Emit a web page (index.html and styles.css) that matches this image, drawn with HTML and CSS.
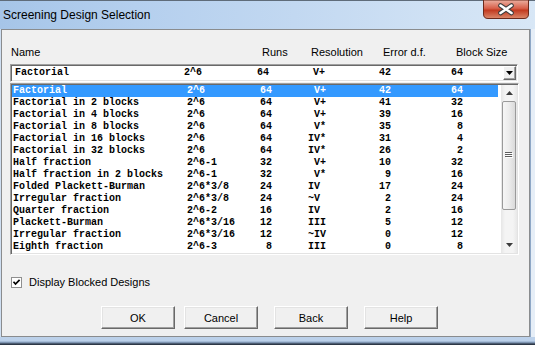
FILE: index.html
```html
<!DOCTYPE html>
<html>
<head>
<meta charset="utf-8">
<link rel="stylesheet" href="styles.css">
</head>
<body>
<div class="window">
  <div class="titlebar">
    <span class="title">Screening Design Selection</span>
    <div class="close">
      <svg width="46" height="19" viewBox="0 0 46 19">
        <defs>
          <linearGradient id="cg" x1="0" y1="0" x2="0" y2="1">
            <stop offset="0" stop-color="#ecb1a2"/>
            <stop offset="0.45" stop-color="#d8604a"/>
            <stop offset="0.55" stop-color="#c23a20"/>
            <stop offset="1" stop-color="#dc8a6c"/>
          </linearGradient>
        </defs>
        <path d="M0.5 0 V14 Q0.5 18.5 5 18.5 H41 Q45.5 18.5 45.5 14 V0 Z" fill="url(#cg)" stroke="#6b2a1c"/>
        <path d="M17.5 5.5 L28.5 13 M28.5 5.5 L17.5 13" stroke="#3d3d3d" stroke-width="4.6" stroke-linecap="round"/>
        <path d="M17.5 5.5 L28.5 13 M28.5 5.5 L17.5 13" stroke="#ffffff" stroke-width="2.6" stroke-linecap="round"/>
      </svg>
    </div>
  </div>
  <div class="client">
    <div class="headers">
      <span>Name</span><span>Runs</span><span>Resolution</span><span>Error d.f.</span><span>Block Size</span>
    </div>
    <div class="combo">
      <div class="combo-row">
        <span>Factorial</span><span>2^6</span><span class="r">64</span><span class="res"> V+</span><span class="r">42</span><span class="r">64</span>
      </div>
      <div class="drop">
        <svg width="7" height="4" viewBox="0 0 7 4"><path d="M0 0 H7 L3.5 4 Z" fill="#000"/></svg>
      </div>
    </div>
    <div class="list">
      <div class="rows">
        <div class="row sel"><span>Factorial</span><span>2^6</span><span class="r">64</span><span class="res"> V+</span><span class="r">42</span><span class="r">64</span></div>
        <div class="row"><span>Factorial in 2 blocks</span><span>2^6</span><span class="r">64</span><span class="res"> V+</span><span class="r">41</span><span class="r">32</span></div>
        <div class="row"><span>Factorial in 4 blocks</span><span>2^6</span><span class="r">64</span><span class="res"> V+</span><span class="r">39</span><span class="r">16</span></div>
        <div class="row"><span>Factorial in 8 blocks</span><span>2^6</span><span class="r">64</span><span class="res"> V*</span><span class="r">35</span><span class="r">8</span></div>
        <div class="row"><span>Factorial in 16 blocks</span><span>2^6</span><span class="r">64</span><span class="res">IV*</span><span class="r">31</span><span class="r">4</span></div>
        <div class="row"><span>Factorial in 32 blocks</span><span>2^6</span><span class="r">64</span><span class="res">IV*</span><span class="r">26</span><span class="r">2</span></div>
        <div class="row"><span>Half fraction</span><span>2^6-1</span><span class="r">32</span><span class="res"> V+</span><span class="r">10</span><span class="r">32</span></div>
        <div class="row"><span>Half fraction in 2 blocks</span><span>2^6-1</span><span class="r">32</span><span class="res"> V*</span><span class="r">9</span><span class="r">16</span></div>
        <div class="row"><span>Folded Plackett-Burman</span><span>2^6*3/8</span><span class="r">24</span><span class="res">IV</span><span class="r">17</span><span class="r">24</span></div>
        <div class="row"><span>Irregular fraction</span><span>2^6*3/8</span><span class="r">24</span><span class="res">~V</span><span class="r">2</span><span class="r">24</span></div>
        <div class="row"><span>Quarter fraction</span><span>2^6-2</span><span class="r">16</span><span class="res">IV</span><span class="r">2</span><span class="r">16</span></div>
        <div class="row"><span>Plackett-Burman</span><span>2^6*3/16</span><span class="r">12</span><span class="res">III</span><span class="r">5</span><span class="r">12</span></div>
        <div class="row"><span>Irregular fraction</span><span>2^6*3/16</span><span class="r">12</span><span class="res">~IV</span><span class="r">0</span><span class="r">12</span></div>
        <div class="row"><span>Eighth fraction</span><span>2^6-3</span><span class="r">8</span><span class="res">III</span><span class="r">0</span><span class="r">8</span></div>
      </div>
      <div class="scrollbar">
        <div class="sb-btn"><svg width="7" height="4" viewBox="0 0 7 4"><path d="M0 4 H7 L3.5 0 Z" fill="#3c3c3c"/></svg></div>
        <div class="sb-thumb">
          <svg width="8" height="7" viewBox="0 0 8 7">
            <path d="M0 0.5 H7 M0 2.5 H7 M0 4.5 H7" stroke="#5e5e5e" stroke-width="1"/>
            <path d="M1 1.5 H8 M1 3.5 H8 M1 5.5 H8" stroke="#ffffff" stroke-width="1"/>
          </svg>
        </div>
        <div class="sb-space"></div>
        <div class="sb-btn"><svg width="7" height="4" viewBox="0 0 7 4"><path d="M0 0 H7 L3.5 4 Z" fill="#3c3c3c"/></svg></div>
      </div>
    </div>
    <div class="check">
      <svg class="box" width="11" height="11" viewBox="0 0 11 11">
        <rect x="0.5" y="0.5" width="10" height="10" fill="#ffffff" stroke="#8f8f8f"/>
        <path d="M2.5 4.8 L4.5 7 L8.6 2.8" stroke="#000" stroke-width="1.7" fill="none"/>
      </svg>
      <span>Display Blocked Designs</span>
    </div>
    <div class="buttons">
      <div class="btn">OK</div>
      <div class="btn b-cancel">Cancel</div>
      <div class="btn b-wide">Back</div>
      <div class="btn b-wide">Help</div>
    </div>
  </div>
  <div class="frame-bottom"></div>
</div>
</body>
</html>
```
FILE: styles.css
```css
* { box-sizing: border-box; }
body {
  margin: 0;
  background: #cfdff2;
  font-family: "Liberation Sans", Arial, sans-serif;
}
.window {
  width: 535px;
  height: 345px;
  display: flex;
  flex-direction: column;
  background: linear-gradient(to right, #cfdff2 0, #cfdff2 529px, #8ea7c6 529px, #8ea7c6 531px, #e6eef7 531px);
  overflow: hidden;
}
.titlebar {
  height: 29px;
  flex: none;
  display: flex;
  align-items: flex-start;
  border-top: 1px solid #5f6c7a;
  background: linear-gradient(to right, #a6c5e8 0%, #b4cfee 25%, #c2d8f1 55%, #cfe1f4 80%, #d8e7f6 100%);
}
.title {
  font-size: 12px;
  line-height: 15px;
  margin: 7px 0 0 3px;
  color: #000;
}
.close {
  margin-left: auto;
  margin-right: 6px;
  margin-top: -1px;
  width: 46px;
  height: 19px;
  display: flex;
}
.client {
  flex: none;
  width: 529px;
  height: 308px;
  margin-left: 1px;
  border: 1px solid #8a8c8e;
  background: #f0f0f0;
  display: flex;
  flex-direction: column;
}
.headers {
  margin: 16px 0 0 9px;
  height: 13px;
  font-size: 11px;
  line-height: 13px;
  display: grid;
  grid-template-columns: 251px 49px 72px 73px 1fr;
  color: #000;
}
.combo {
  margin: 5px 0 0 8px;
  width: 508px;
  height: 18px;
  border: 1px solid;
  border-color: #a0a0a0 #ffffff #ffffff #a0a0a0;
  box-shadow: inset 1px 1px #696969, inset -1px -1px #e3e3e3;
  padding: 1px;
  background: #ffffff;
  display: flex;
}
.combo-row {
  flex: 1;
  padding-left: 3px;
  display: grid;
  grid-template-columns: 169px 60px 25px 81px 41px 72px;
  font-family: "Liberation Mono", "Courier New", monospace;
  font-weight: bold;
  font-size: 10px;
  line-height: 14px;
  white-space: pre;
  color: #000;
}
.combo-row .res { padding-left: 38px; }
.drop {
  width: 13px;
  height: 14px;
  background: #f0f0f0;
  border: 1px solid;
  border-color: #ffffff #696969 #696969 #ffffff;
  box-shadow: inset -1px -1px #a0a0a0;
  display: flex;
  align-items: center;
  justify-content: center;
}
.list {
  margin: 1px 0 0 8px;
  width: 509px;
  height: 172px;
  border: 1px solid;
  border-color: #a0a0a0 #ffffff #ffffff #a0a0a0;
  box-shadow: inset 1px 1px #696969, inset -1px -1px #e3e3e3;
  padding: 1px;
  background: #ffffff;
  display: flex;
}
.rows {
  flex: 1;
  display: flex;
  flex-direction: column;
}
.row {
  height: 12px;
  padding-left: 1px;
  display: grid;
  grid-template-columns: 174px 61px 24px 78px 41px 72px;
  font-family: "Liberation Mono", "Courier New", monospace;
  font-weight: bold;
  font-size: 10px;
  line-height: 12px;
  white-space: pre;
  color: #000;
}
.row .res { padding-left: 36px; }
.r { text-align: right; }
.row.sel {
  background: #3399ff;
  color: #ffffff;
}
.scrollbar {
  width: 16px;
  margin-left: 3px;
  display: flex;
  flex-direction: column;
  background: linear-gradient(to right, #e6e6e6, #f4f4f4 25%, #f4f4f4 75%, #e8e8e8);
}
.sb-btn {
  height: 16px;
  display: flex;
  align-items: center;
  justify-content: center;
}
.sb-thumb {
  height: 109px;
  margin: 0 1px;
  border: 1px solid #9a9a9a;
  border-radius: 2px;
  background: linear-gradient(to right, #f6f6f6, #ececec 50%, #dadada);
  display: flex;
  align-items: center;
  justify-content: center;
}
.sb-space { flex: 1; }
.check {
  margin: 22px 0 0 9px;
  height: 11px;
  display: flex;
  align-items: center;
  font-size: 11px;
  line-height: 11px;
  color: #000;
}
.check .box { flex: none; }
.check span { margin-left: 7px; }
.buttons {
  margin: 18px 0 0 99px;
  display: flex;
}
.btn {
  width: 74px;
  height: 23px;
  background: #f0f0f0;
  border: 1px solid;
  border-color: #ffffff #696969 #696969 #ffffff;
  box-shadow: inset -1px -1px #a0a0a0, inset 1px 1px #e3e3e3;
  display: flex;
  align-items: center;
  justify-content: center;
  font-size: 11px;
  color: #000;
}
.b-cancel { margin-left: 9px; }
.b-wide { margin-left: 16px; }
.frame-bottom {
  flex: 1;
  background: linear-gradient(to bottom, #bcd1ea 0, #bcd1ea 4px, #8fa7c5 5px, #6c819c 6px, #2d3746 7px, #2d3746 100%);
}
```
